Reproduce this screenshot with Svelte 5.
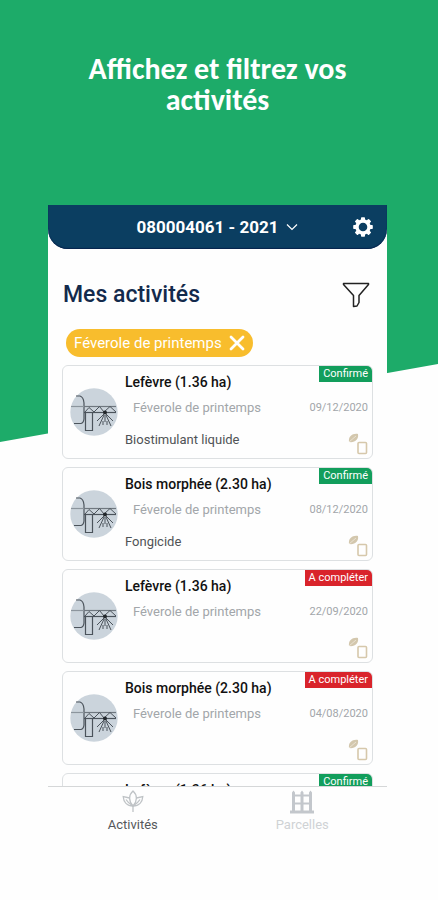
<script lang="ts">
  type Activity = {
    parcel: string;
    crop: string;
    date?: string;
    product?: string;
    done: boolean;
  };

  const activities: Activity[] = [
    { parcel: "Lefèvre (1.36 ha)", crop: "Féverole de printemps", date: "09/12/2020", product: "Biostimulant liquide", done: true },
    { parcel: "Bois morphée (2.30 ha)", crop: "Féverole de printemps", date: "08/12/2020", product: "Fongicide", done: true },
    { parcel: "Lefèvre (1.36 ha)", crop: "Féverole de printemps", date: "22/09/2020", done: false },
    { parcel: "Bois morphée (2.30 ha)", crop: "Féverole de printemps", date: "04/08/2020", done: false },
    { parcel: "Lefèvre (1.36 ha)", crop: "Féverole de printemps", done: true },
  ];

  const teeth = [0, 45, 90, 135, 180, 225, 270, 315];

  let filter = $state("Féverole de printemps");
  let tab: "activities" | "parcels" = $state("activities");

  let shown = $derived(activities.filter((a) => !filter || a.crop === filter));
</script>

<div class="stage">
  <h1>Affichez et filtrez vos activités</h1>

  <main class="phone">
    <header>
      <button class="farm">
        080004061 - 2021
        <svg width="12" height="8" viewBox="0 0 12 8"><path d="M1 1.5 L6 6.5 L11 1.5" fill="none" stroke="#fff" stroke-width="1.2" /></svg>
      </button>
      <button class="icon settings" aria-label="Paramètres">
        <svg width="20" height="20" viewBox="-10 -10 20 20">
          <circle r="6" fill="none" stroke="#fff" stroke-width="3.4" />
          {#each teeth as angle}
            <rect x="-2" y="-9.8" width="4" height="4" rx="0.8" fill="#fff" transform="rotate({angle})" />
          {/each}
        </svg>
      </button>
    </header>

    <div class="heading">
      <h2>Mes activités</h2>
      <button class="icon" aria-label="Filtrer">
        <svg width="28" height="26" viewBox="0 0 28 26">
          <path d="M1.5 1.5 H26.5 V2.5 L17 13.5 V20.5 L15 24 L11.5 24.5 V13.5 L1.5 2.5 Z" fill="none" stroke="#222" stroke-width="1.5" stroke-linejoin="round" />
        </svg>
      </button>
    </div>

    <div class="filters">
      {#if filter}
        <button class="chip" onclick={() => (filter = "")}>
          {filter}
          <svg width="16" height="16" viewBox="0 0 16 16"><path d="M2 2 L14 14 M14 2 L2 14" stroke="#fff" stroke-width="2.8" stroke-linecap="round" /></svg>
        </button>
      {/if}
    </div>

    <ul class="list">
      {#each shown as activity}
        <li class="card">
          <svg class="sprayer" width="48" height="48" viewBox="0 0 48 48">
            <circle cx="24" cy="24" r="23.7" fill="#cbd4dc" />
            <g fill="none" stroke="#4b535b" stroke-width="1.2">
              <path d="M6 8 H10 Q13.5 9 14 15 V31 Q13.5 35 11 35.500 H4" />
              <path d="M1 18.500 H14" stroke="#8c959d" />
              <path d="M14 18.500 H46" stroke="#6f777f" />
              <path d="M14 24.500 H46" />
              <path d="M15 24 L19 19.500 L24 24 L29.500 18.500 L34 24 L40 18.500 L46 24" stroke-width="1" />
              <path d="M15.500 24.500 H22.500 V42.500 H15.500 Z" />
              <path d="M34 26 L27 33 M34 27 L29 38 M35 27 V34 M36 27 L41 38 M36 26 L43 33 M33 33 V37 M37 33 V37" stroke-width="1" />
            </g>
            <circle cx="35" cy="24.500" r="2" fill="#22272b" />
          </svg>
          <div class="body">
            <h3>{activity.parcel}</h3>
            <p class="crop"><span>{activity.crop}</span><time>{activity.date ?? ""}</time></p>
            <div class="product">
              <p>{activity.product ?? ""}</p>
              <svg width="20" height="22" viewBox="0 0 20 22">
                <path d="M1 9 C0 3 5 0 10 1 C11 6 7 10 1 9 Z" fill="#d3c7ad" />
                <path d="M1 9 L8 3" stroke="#efe8da" stroke-width="0.8" />
                <rect x="10" y="9.500" width="8.500" height="11" rx="1" fill="none" stroke="#d6c8ab" stroke-width="1.6" />
              </svg>
            </div>
          </div>
          <span class="badge" class:todo={!activity.done}>{activity.done ? "Confirmé" : "A compléter"}</span>
        </li>
      {/each}
    </ul>

    <nav>
      <button class:active={tab === "activities"} onclick={() => (tab = "activities")}>
        <svg width="22" height="22" viewBox="0 0 22 22">
          <g fill="none" stroke="#bfc3c6" stroke-width="1.3">
            <path d="M11 1 C6.500 5 6.500 11 11 16 C15.500 11 15.500 5 11 1 Z" />
            <path d="M7.500 8 L1.200 6.500 C1.500 12 5 16 11 16 M14.500 8 L20.800 6.500 C20.500 12 17 16 11 16 V22" />
            <path d="M4 9.500 Q6 13 11 16 Q16 13 18 9.500" />
          </g>
        </svg>
        Activités
      </button>
      <button class:active={tab === "parcels"} onclick={() => (tab = "parcels")}>
        <svg width="24" height="24" viewBox="0 0 24 24">
          <g fill="#c3c7cc">
            <path d="M2 2.500 L3.500 0.500 L5 2.500 V22 H2 Z M10.500 2.500 L12 0.500 L13.500 2.500 V22 H10.500 Z M19 2.500 L20.500 0.500 L22 2.500 V22 H19 Z" />
            <rect x="2" y="4.500" width="20" height="2" />
            <rect x="2" y="12.500" width="20" height="2" />
            <rect x="0" y="20.500" width="24" height="3" />
          </g>
        </svg>
        Parcelles
      </button>
    </nav>
  </main>
</div>

<style>
  :global(body) {
    background: #fefefe;
  }

  .stage {
    position: relative;
    display: flex;
    flex-direction: column;
    box-sizing: border-box;
    height: 100vh;
    padding: 53px 51px 59px 48px;
    font-family: Roboto, "Liberation Sans", sans-serif;
  }

  /* slanted green backdrop */
  .stage::before {
    content: "";
    position: absolute;
    inset: 0 0 auto;
    z-index: -1;
    height: 442px;
    background: #1dab69;
    clip-path: polygon(0 0, 100% 0, 100% 364px, 0 100%);
  }

  h1, h2, h3, p, ul {
    margin: 0;
    padding: 0;
  }

  h1 {
    height: 152px;
    flex-shrink: 0;
    padding: 0 24px;
    color: #fff;
    font: 700 30px/31px Carlito, "Noto Sans", sans-serif;
    text-align: center;
  }

  button {
    padding: 0;
    border: 0;
    background: none;
    color: inherit;
    font: inherit;
    cursor: pointer;
  }

  svg {
    display: block;
    flex-shrink: 0;
  }

  .phone {
    display: flex;
    flex: 1;
    flex-direction: column;
    min-height: 0;
    background: #fefefe;
  }

  header {
    display: grid;
    grid-template-columns: 1fr auto 1fr;
    align-items: center;
    height: 44px;
    flex-shrink: 0;
    padding: 0 14px;
    border-radius: 0 0 20px 20px;
    background: #0b3e61;
    box-shadow: inset 0 -1px 1px #06234e;
    color: #fff;
  }

  .farm {
    display: flex;
    grid-column: 2;
    align-items: center;
    gap: 8px;
    font-size: 17px;
    font-weight: 700;
  }

  .settings {
    justify-self: end;
  }

  .heading {
    display: flex;
    align-items: center;
    justify-content: space-between;
    padding: 30px 17px 0 15px;
  }

  h2 {
    color: #132a4c;
    font-size: 23px;
    font-weight: 500;
    line-height: 32px;
  }

  .filters {
    display: flex;
    padding: 18px 18px 8px;
  }

  .chip {
    display: flex;
    align-items: center;
    gap: 7px;
    height: 28px;
    padding: 0 8px;
    border-radius: 14px;
    background: #f8bd2d;
    color: #fff;
    font-size: 15px;
  }

  .list {
    display: flex;
    flex: 1;
    flex-direction: column;
    gap: 8px;
    min-height: 0;
    padding: 0 14px;
    overflow-y: auto;
    scrollbar-width: none;
    list-style: none;
  }

  .card {
    position: relative;
    display: flex;
    flex-shrink: 0;
    align-items: center;
    gap: 7px;
    box-sizing: border-box;
    height: 94px;
    padding: 0 4px 0 7px;
    border: 1px solid #dde0e2;
    border-radius: 6px;
  }

  .body {
    flex: 1;
    padding-top: 2px;
  }

  h3 {
    color: #111;
    font-size: 14px;
    font-weight: 500;
    line-height: 26px;
  }

  .crop {
    display: flex;
    align-items: center;
    justify-content: space-between;
    padding-left: 8px;
    color: #a2a6aa;
    font-size: 13px;
    line-height: 26px;
  }

  time {
    font-size: 11px;
  }

  .product {
    display: flex;
    align-items: center;
    justify-content: space-between;
    height: 36px;
    color: #505356;
    font-size: 13px;
  }

  .product svg {
    align-self: end;
    margin-bottom: 2px;
  }

  .badge {
    position: absolute;
    top: 0;
    right: 0;
    padding: 0 4px;
    border-radius: 0 5px 0 0;
    background: #129e5c;
    color: #fff;
    font-size: 11px;
    line-height: 16px;
  }

  .badge.todo {
    background: #d9242b;
  }

  nav {
    display: grid;
    grid-template-columns: 1fr 1fr;
    height: 54px;
    flex-shrink: 0;
    border-top: 1px solid #d5d7d8;
  }

  nav button {
    display: flex;
    flex-direction: column;
    align-items: center;
    justify-content: space-between;
    padding: 3px 0 8px;
    color: #cfd2d5;
    font-size: 13px;
    line-height: 16px;
  }

  nav button.active {
    color: #55585b;
  }
</style>
